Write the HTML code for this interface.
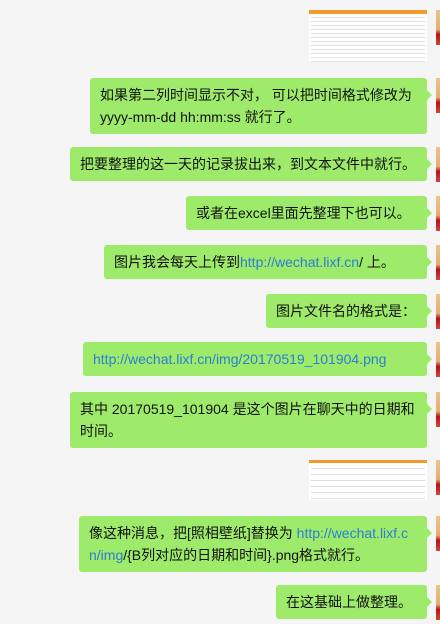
<!DOCTYPE html>
<html><head><meta charset="utf-8"><style>
body{margin:0;width:440px;height:624px;background:#f5f5f5;position:relative;overflow:hidden;font-family:"Liberation Sans","Noto Sans CJK SC",sans-serif;font-size:14px;color:#111}
.b{position:absolute;right:13px;background:#9eea6a;border-radius:3px;padding:6px 10px;line-height:22px;box-sizing:border-box}
.b:after{content:"";position:absolute;right:-5px;top:12px;border-left:5px solid #9eea6a;border-top:5px solid transparent;border-bottom:5px solid transparent}
.av{position:absolute;left:436px;width:8px;height:35px;background:linear-gradient(#e9c48a 0,#e2b070 55%,#b8121c 70%,#c94a3a 100%)}
a{color:#2a7fd4;text-decoration:none}
.img{position:absolute;left:309px;width:118px;background:#fff;box-sizing:border-box;overflow:hidden}
.row{height:3px;border-bottom:1px solid #e0e0e0;margin:0 2px}
</style></head><body>
<div class="img" style="top:10px;height:52px"><div style="height:4px;background:#f39a2a"></div>
<div class="row"></div><div class="row"></div><div class="row"></div><div class="row"></div><div class="row"></div><div class="row"></div><div class="row"></div><div class="row"></div><div class="row"></div><div class="row"></div><div class="row"></div><div class="row"></div></div>
<div class="av" style="top:10px"></div>
<div class="b" style="left:90px;top:78px">如果第二列时间显示不对， 可以把时间格式修改为yyyy-mm-dd hh:mm:ss 就行了。</div>
<div class="av" style="top:78px"></div>
<div class="b" style="left:70px;top:147px">把要整理的这一天的记录拔出来，到文本文件中就行。</div>
<div class="av" style="top:147px"></div>
<div class="b" style="left:186px;top:196px">或者在excel里面先整理下也可以。</div>
<div class="av" style="top:196px"></div>
<div class="b" style="left:104px;top:245px">图片我会每天上传到<a>http://wechat.lixf.cn</a>/ 上。</div>
<div class="av" style="top:245px"></div>
<div class="b" style="left:266px;top:294px">图片文件名的格式是：</div>
<div class="av" style="top:294px"></div>
<div class="b" style="left:83px;top:342px"><a>http://wechat.lixf.cn/img/20170519_101904.png</a></div>
<div class="av" style="top:342px"></div>
<div class="b" style="left:70px;top:392px">其中 20170519_101904 是这个图片在聊天中的日期和时间。</div>
<div class="av" style="top:392px"></div>
<div class="img" style="top:460px;height:40px"><div style="height:3px;background:#f39a2a"></div>
<div class="row" style="height:5px"></div><div class="row" style="height:5px"></div><div class="row" style="height:5px"></div><div class="row" style="height:5px"></div><div class="row" style="height:5px"></div><div class="row" style="height:5px"></div></div>
<div class="av" style="top:460px"></div>
<div class="b" style="left:79px;top:516px;word-break:break-all">像这种消息，把[照相壁纸]替换为 <a>http://wechat.lixf.cn/img</a>/{B列对应的日期和时间}.png格式就行。</div>
<div class="av" style="top:516px"></div>
<div class="b" style="left:276px;top:585px">在这基础上做整理。</div>
<div class="av" style="top:585px"></div>
</body></html>
